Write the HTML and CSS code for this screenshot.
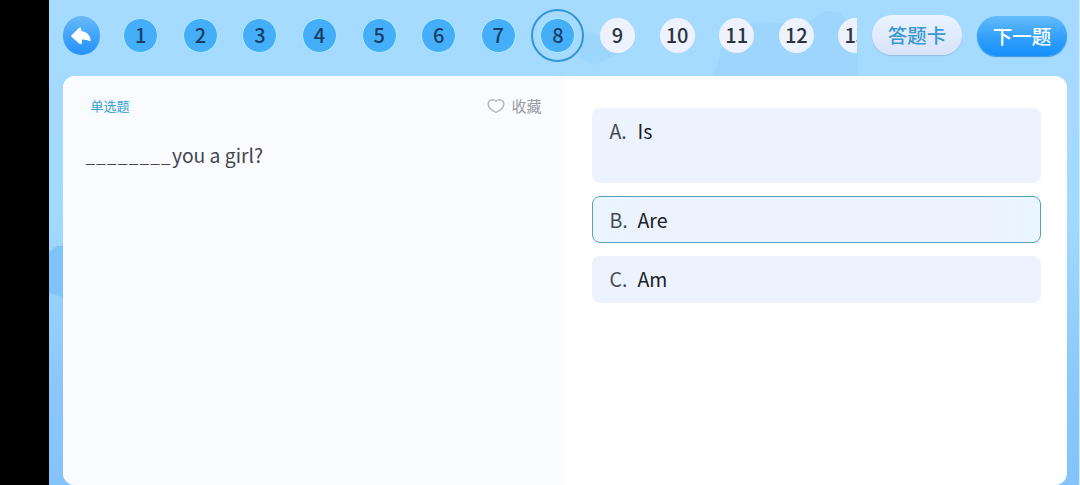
FILE: index.html
```html
<!DOCTYPE html>
<html lang="zh-CN">
<head>
    <meta charset="UTF-8">
    <meta name="viewport" content="width=device-width, initial-scale=1.0">
    <title>单选题</title>
    <link rel="stylesheet" href="styles.css">
</head>
<body>
    <div class="app">
        <!-- Background shapes -->
        <svg class="backdrop" viewBox="0 0 1030 485" aria-hidden="true">
            <path d="M536 31 L552 36 L566 34 L571 53 L546 65 L530 58 Z" fill="#9dd6fd"/>
            <path d="M704 22 L758 24 L775 11 L790 12 L797 19 L801 31 L809 50 V76 H663 Q670 62 672 50 L679 34 Z" fill="#9dd5fd"/>
            <path d="M0 252 L8 246 H16 V298 L0 293 Z" fill="#7fc3fd"/>
        </svg>

        <header class="toolbar">
            <button class="back" aria-label="返回">
                <svg width="20" height="18" viewBox="0 0 20 18">
                    <path d="M1.2 8.4 L8.4 1.4 Q9.6 0.5 9.6 2 V4.7 Q18.2 5.2 19 13.6 Q15.6 11.6 10.4 12 V15.6 Q10.2 17.2 8.8 16.2 L1.2 9.6 Q0.6 9 1.2 8.4 Z" fill="#fff" stroke="#fff" stroke-width="1.2" stroke-linejoin="round"/>
                </svg>
            </button>
            <nav class="numbers">
                <div class="cell"><span class="num done">1</span></div>
                <div class="cell"><span class="num done">2</span></div>
                <div class="cell"><span class="num done">3</span></div>
                <div class="cell"><span class="num done">4</span></div>
                <div class="cell"><span class="num done">5</span></div>
                <div class="cell"><span class="num done">6</span></div>
                <div class="cell"><span class="num done">7</span></div>
                <div class="cell"><div class="ring"><span class="num done">8</span></div></div>
                <div class="cell"><span class="num">9</span></div>
                <div class="cell"><span class="num">10</span></div>
                <div class="cell"><span class="num">11</span></div>
                <div class="cell"><span class="num">12</span></div>
                <div class="cell"><span class="num">13</span></div>
            </nav>
            <button class="pill sheet">答题卡</button>
            <button class="pill next">下一题</button>
        </header>

        <main class="card">
            <section class="question">
                <div class="question-head">
                    <span class="type">单选题</span>
                    <span class="favorite">
                        <svg width="18" height="16" viewBox="0 0 18 16">
                            <path d="M9 14.3 C5.5 12.9 1.2 10 1.2 6 C1.2 1.4 6.4 0.6 9 3.2 C11.6 0.6 16.8 1.4 16.8 6 C16.8 10 12.5 12.9 9 14.3 Z" fill="none" stroke="#b5b7bb" stroke-width="1.4" stroke-linejoin="round"/>
                        </svg>
                        收藏
                    </span>
                </div>
                <p class="stem"><span class="blank">________</span>you a girl?</p>
            </section>
            <section class="options">
                <div class="option tall"><span class="letter">A.</span>Is</div>
                <div class="option selected"><span class="letter">B.</span>Are</div>
                <div class="option"><span class="letter">C.</span>Am</div>
            </section>
        </main>
    </div>
</body>
</html>
```
FILE: styles.css
```css
* {
    box-sizing: border-box;
}
body {
    margin: 0;
    height: 485px;
    padding: 0 1px 0 49px;
    overflow: hidden;
    background: linear-gradient(90deg, #000 50%, #d3ecff 50%);
    font-family: "Noto Sans CJK SC", sans-serif;
}
.app {
    position: relative;
    height: 485px;
    padding: 0 12px 0 13.5px;
    background: linear-gradient(180deg, #a6dbff 0%, #a2d9ff 45%, #8bc7fc 80%, #84c3fb 100%);
}
.backdrop {
    position: absolute;
    top: 0;
    left: 0;
    width: 1030px;
    height: 485px;
}
.toolbar {
    position: relative;
    display: flex;
    align-items: center;
    height: 76px;
    padding-bottom: 5px;
}
button {
    border: none;
    padding: 0;
    font-family: inherit;
    cursor: pointer;
}
.back {
    display: flex;
    align-items: center;
    justify-content: center;
    width: 38px;
    height: 39px;
    border-radius: 50%;
    background: linear-gradient(180deg, #69bbf5 0%, #45a6fa 45%, #2791fa 100%);
}
.numbers {
    display: flex;
    align-items: center;
    width: 748px;
    height: 71px;
    padding-left: 1px;
    margin-left: 9.5px;
    overflow: hidden;
}
.cell {
    display: flex;
    flex: 0 0 59.6px;
    justify-content: center;
}
.num {
    display: flex;
    align-items: center;
    justify-content: center;
    width: 35px;
    height: 35px;
    padding-bottom: 2px;
    border-radius: 50%;
    background: #edf2fe;
    color: #2c3340;
    font-size: 20px;
    font-weight: 500;
    line-height: 1;
}
.done {
    border: 1.5px solid #b0ecff;
    background: #44aff8;
    color: #173f66;
}
.ring {
    display: flex;
    align-items: center;
    justify-content: center;
    flex: none;
    width: 53px;
    height: 53px;
    border: 2px solid #3295d8;
    border-radius: 50%;
}
.pill {
    width: 90px;
    height: 40px;
    border-radius: 20px;
    font-size: 19.5px;
    font-weight: 500;
    line-height: 37px;
}
.sheet {
    margin-left: 15px;
    margin-bottom: 2px;
    background: linear-gradient(180deg, #e9f4ff 0%, #e0eafc 55%, #d7e3fa 100%);
    box-shadow: 0 1px 1px #94bce4;
    color: #3b98d0;
}
.next {
    margin-left: 15px;
    background: linear-gradient(180deg, #65bcfa 0%, #35a1fb 50%, #1590fb 100%);
    box-shadow: 0 1px 1px #3e95db;
    color: #fff;
}
.card {
    position: relative;
    display: flex;
    height: 409px;
    border-radius: 12px;
    background: #fff;
    overflow: hidden;
}
.question {
    width: 501px;
    padding: 18px 22px 0 23px;
    background: #f9fbff;
}
.question-head {
    display: flex;
    align-items: center;
    justify-content: space-between;
    height: 24px;
}
.type {
    padding: 0 5px;
    background: #f5fbff;
    color: #3ba0cd;
    font-size: 13px;
    line-height: 22px;
}
.favorite {
    display: flex;
    align-items: center;
    gap: 6px;
    color: #999ba0;
    font-size: 15px;
    line-height: 22px;
}
.stem {
    margin: 22px 0 0;
    color: #44464d;
    font-size: 19.3px;
    line-height: 30px;
}
/* Smaller glyphs with spacing keep the dashes apart */
.blank {
    font-size: 17px;
    letter-spacing: 1.3px;
}
.options {
    display: flex;
    flex: 1;
    flex-direction: column;
    gap: 13px;
    padding: 32px 26px 0 28px;
}
.option {
    display: flex;
    height: 47px;
    padding-left: 18px;
    border-radius: 8px;
    background: #ecf2fe;
    color: #1b1d26;
    font-size: 19.5px;
    line-height: 46px;
}
.tall {
    height: 75px;
}
.selected {
    padding-left: 17px;
    border: 1px solid #55a3b9;
    background: linear-gradient(90deg, #e9f5ff 0%, #ecf2fe 12%, #ecf2fe 88%, #e9f5ff 100%);
    line-height: 45px;
}
.letter {
    width: 28px;
    color: #474a54;
}
```
